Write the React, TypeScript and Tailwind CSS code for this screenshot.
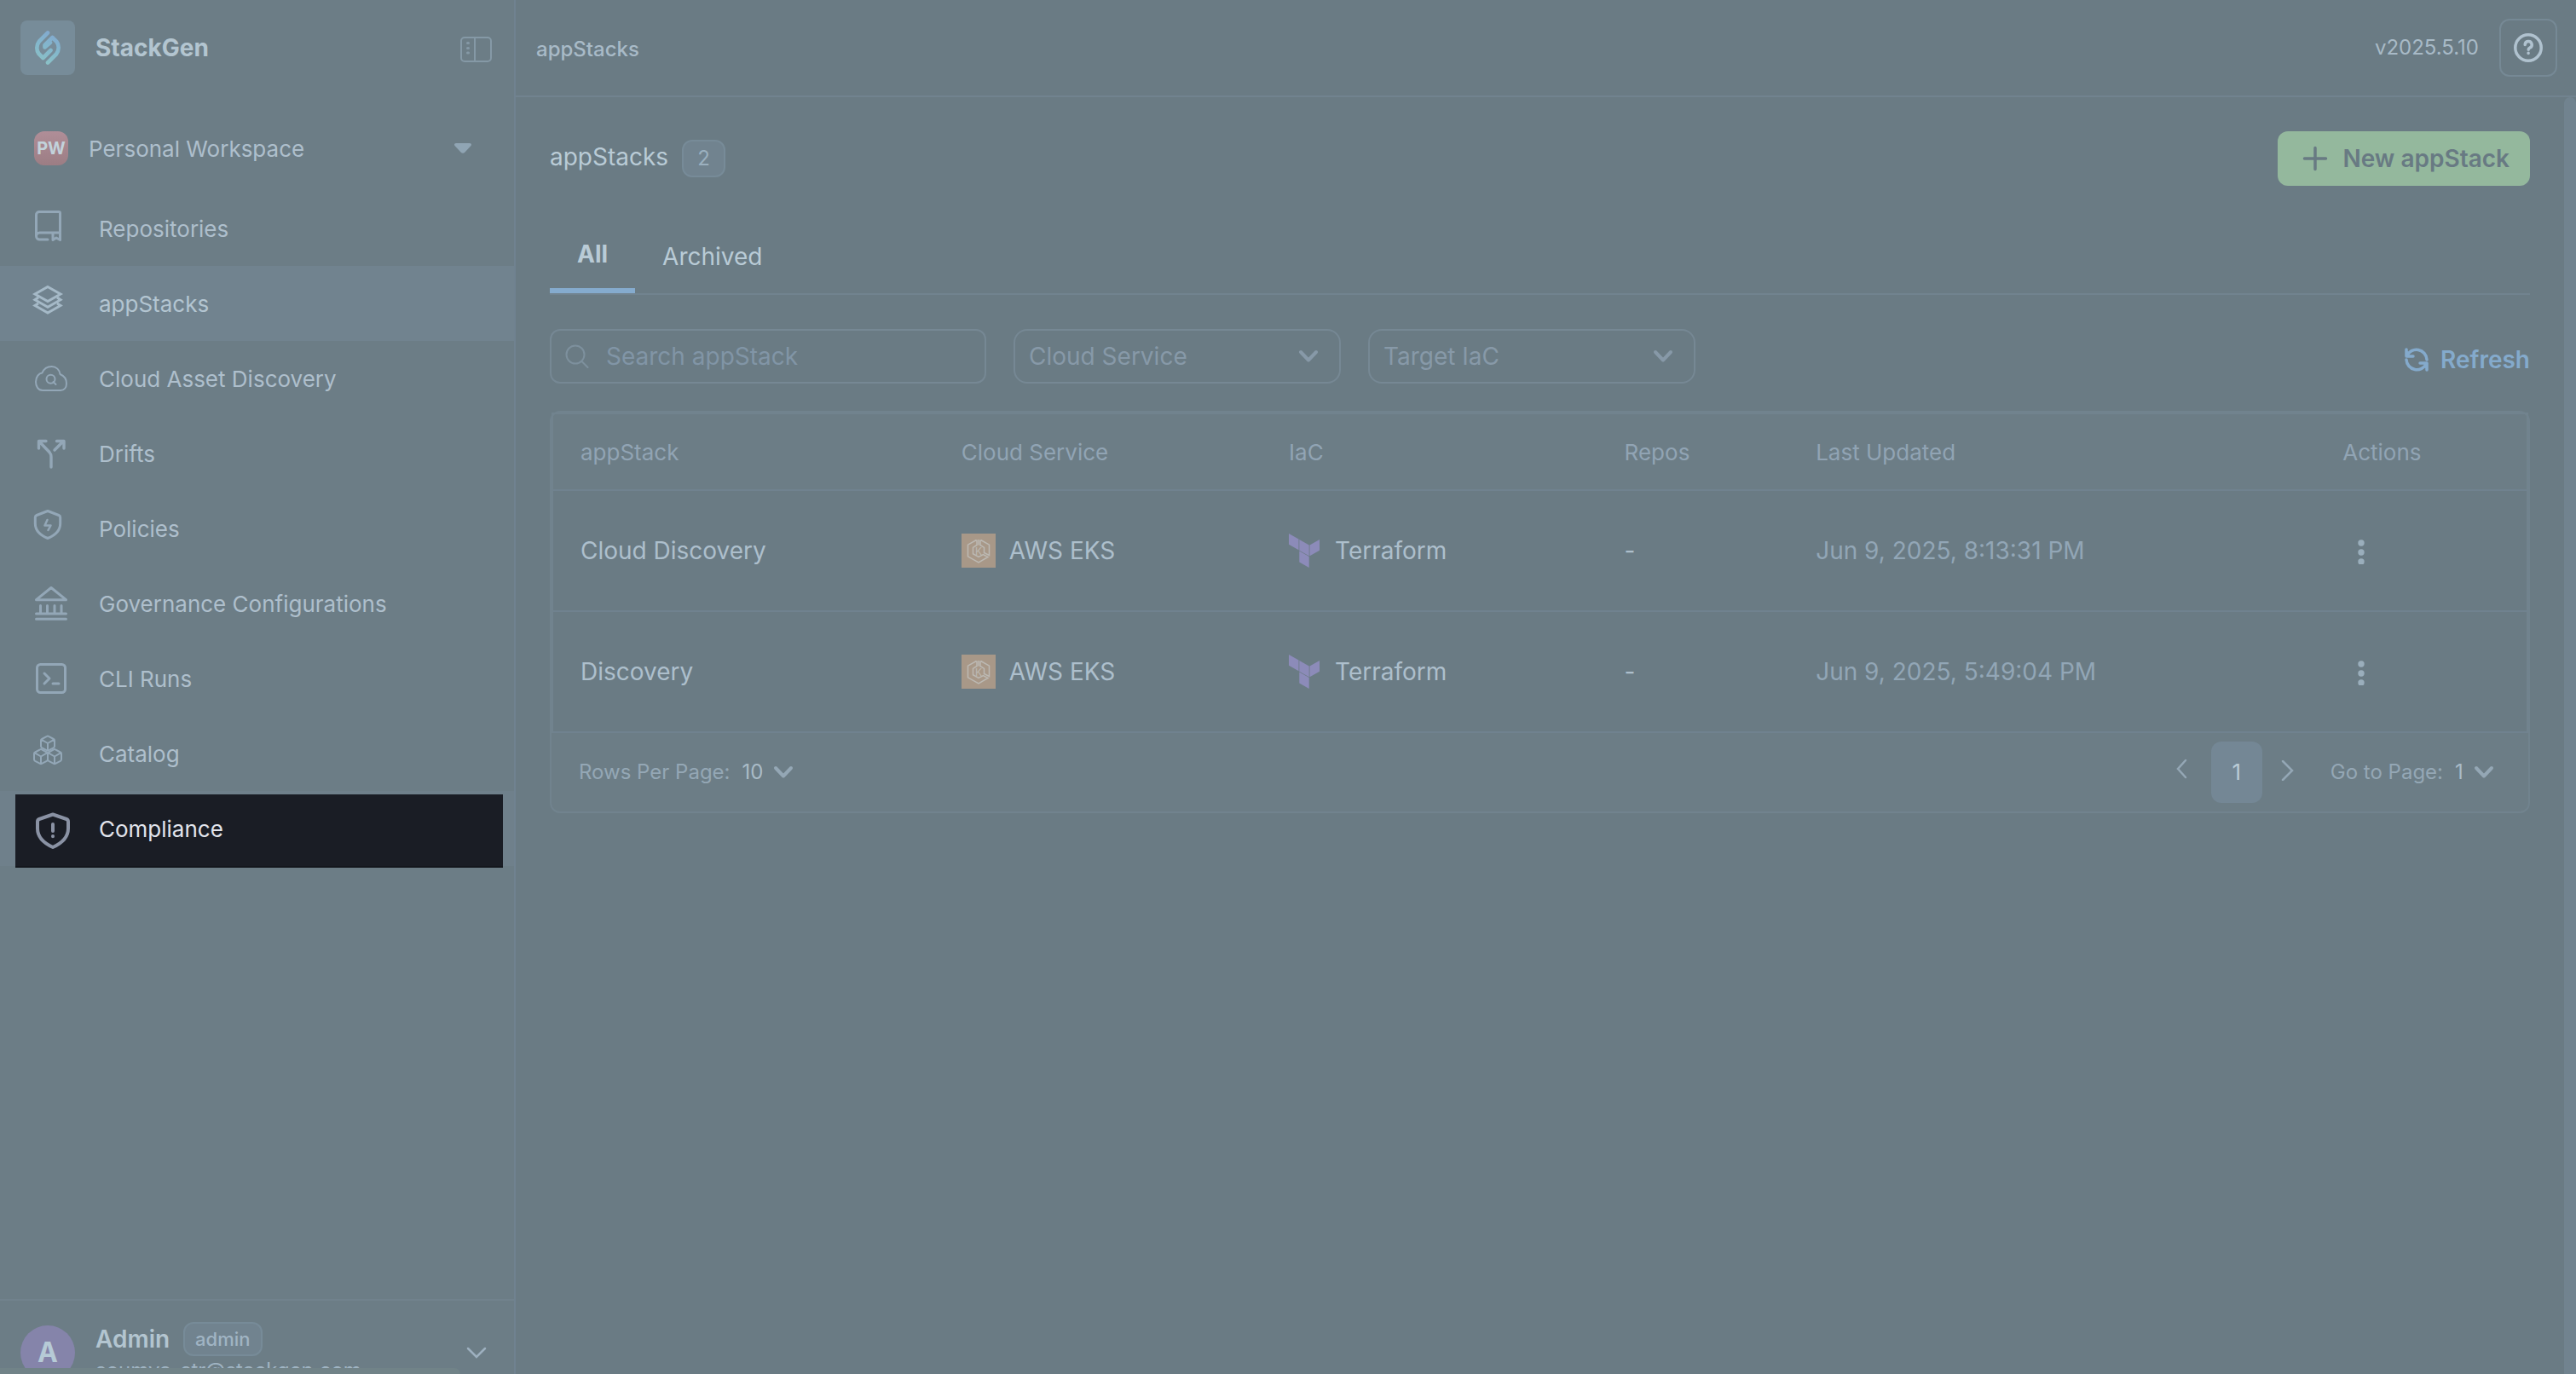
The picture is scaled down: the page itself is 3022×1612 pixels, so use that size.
import type { ReactNode } from "react";

const Chevron = ({ className }: { className?: string }) => (
  <svg viewBox="0 0 24 16" className={className} fill="none" stroke="currentColor" strokeWidth="4" strokeLinecap="round" strokeLinejoin="round" aria-hidden="true">
    <path d="M3 3l9 9.5L21 3" />
  </svg>
);

const NavIcon = ({ children, width = 3 }: { children: ReactNode; width?: number }) => (
  <svg viewBox="0 0 48 48" className="size-12 shrink-0" fill="none" stroke="currentColor" strokeWidth={width} strokeLinecap="round" strokeLinejoin="round" aria-hidden="true">
    {children}
  </svg>
);

// isometric cube, hexagon outline with the three inner edges
const Cube = ({ x, y }: { x: number; y: number }) => (
  <path
    transform={`translate(${x} ${y})`}
    d="M-1-8.2Q0-8.8 1-8.2L6.8-5Q8-4.4 8-3.2V3.4Q8 4.6 6.8 5.3L1 8.4Q0 9-1 8.4L-6.8 5.3Q-8 4.6-8 3.4V-3.2Q-8-4.4-6.8-5ZM-7.6-4.4L0 0L7.6-4.4M0 0V8.6"
  />
);

const Logo = () => (
  <svg viewBox="0 0 30 40" className="h-10 w-[30px]" fill="none" stroke="url(#logo-fill)" strokeWidth="4.6" strokeLinecap="round" strokeLinejoin="round" aria-hidden="true">
    <defs>
      <linearGradient id="logo-fill" x1="24" y1="2" x2="8" y2="38" gradientUnits="userSpaceOnUse">
        <stop stopColor="#82a8cf" />
        <stop offset="0.5" stopColor="#83b7cc" />
        <stop offset="1" stopColor="#8bc1c6" />
      </linearGradient>
    </defs>
    <path d="M15 2.5L5 12.5C1.5 17 1.5 23 4.5 27L9.5 32L18.5 23" />
    <path d="M15 37.5L25 27.5C28.5 23 28.5 17 25.5 13L20.5 8L11.5 17V19.5L18 14" />
  </svg>
);

const navItems = [
  {
    label: "Repositories",
    icon: (
      <NavIcon>
        <path d="M20 37H10.5A4 4 0 0 1 6.5 33V8A3.5 3.5 0 0 1 10 4.5H33A1.5 1.5 0 0 1 34.5 6V30M6.5 33A4 4 0 0 1 10.5 29H34.5" />
        <path d="M26 30V37.5L30 35L34.5 37.5V30" />
      </NavIcon>
    ),
  },
  {
    label: "appStacks",
    active: true,
    icon: (
      <NavIcon>
        <path strokeLinejoin="miter" strokeLinecap="butt" d="M20 4.5L35 13L20 21.5L5 13ZM9 17L5 19.7L20 28.2L35 19.7L31 17M9 24L5 26.5L20 35L35 26.5L31 24" />
      </NavIcon>
    ),
  },
  {
    label: "Cloud Asset Discovery",
    icon: (
      <NavIcon width={2}>
        <path d="M14 38C8.500 38 6 33 6 28C6 21.5 10 18 13.5 17.5C15.5 12.5 19.5 10 24.5 10C30 10 34 14 34.5 19C39.5 21 42 25 42 30C42 35 39 38 35 38Z" />
        <circle cx="23.5" cy="24.7" r="5" />
        <path d="M26.5 28L29.5 31" />
      </NavIcon>
    ),
  },
  {
    label: "Drifts",
    icon: (
      <NavIcon width={3.4}>
        <path d="M18 9.5H9.5V18M10 10L22 22.5Q24 25 24 28V40M28 20L38.5 9.5M30.5 9.5H39V18" />
      </NavIcon>
    ),
  },
  {
    label: "Policies",
    icon: (
      <NavIcon>
        <path d="M20 3.5L33 8.5C34.2 9 34.7 9.7 34.7 11V18C34.7 26 29 32 20 35.5C11 32 5.3 26 5.3 18V11C5.3 9.7 5.8 9 7 8.5Z" />
        <path strokeWidth="2.5" d="M19.5 14L16.5 20.5H23.5L20.5 26" />
      </NavIcon>
    ),
  },
  {
    label: "Governance Configurations",
    icon: (
      <NavIcon>
        <path d="M24 5.5L41.5 19.7H6.5ZM11.5 26.5V35M19.5 26.5V35M28 26.5V35M36 26.5V35M6.5 36H41.5M6.5 42.3H41.5" />
      </NavIcon>
    ),
  },
  {
    label: "CLI Runs",
    icon: (
      <NavIcon>
        <rect x="7.5" y="7.5" width="33" height="33" rx="4" />
        <path d="M16 18L22 24L16 30M26 30H33" />
      </NavIcon>
    ),
  },
  {
    label: "Catalog",
    icon: (
      <NavIcon width={2}>
        <Cube x={20} y={12} />
        <Cube x={12} y={27.5} />
        <Cube x={28} y={27.5} />
      </NavIcon>
    ),
  },
];

const rows = [
  { name: "Cloud Discovery", updated: "Jun 9, 2025, 8:13:31 PM" },
  { name: "Discovery", updated: "Jun 9, 2025, 5:49:04 PM" },
];

const EksIcon = () => (
  <svg viewBox="0 0 40 40" className="size-10 shrink-0" fill="none" stroke="#bcb9b3" strokeWidth="1.5" aria-hidden="true">
    <path fill="#a89888" stroke="none" d="M0 0h40v40H0z" />
    <path d="M17.5 7.5L7.5 13.2V26.8L20 34L31 27.5L25.5 24.5L20 27.5L13.5 23.7V16.3L18 13.5V7.5M22.5 7.5L32.5 13.2V25.5L26.5 22.5V16.3L22 13.5V7.5M20 7V13.5" />
    <text x="20" y="24.5" textAnchor="middle" fontSize="12" fill="#bcb9b3" stroke="none" fontFamily="Inter, sans-serif">K</text>
  </svg>
);

const TerraformIcon = () => (
  <svg viewBox="0 0 36 40" className="h-10 w-9 shrink-0" fill="#8c8bb9" aria-hidden="true">
    <path d="M0 0L11.5 6.5V19.3L0 12.7ZM12.3 7L23.7 13.5V26.2L12.3 19.7ZM24.5 13.5L36 7V19.7L24.5 26.2ZM12.3 20.6L23.7 27.1V40L12.3 33.4Z" />
  </svg>
);

const FilterSelect = ({ label }: { label: string }) => (
  <div className="relative w-96">
    <select aria-label={label} className="h-16 w-full appearance-none rounded-2xl border-2 border-[#768894] bg-transparent px-4 text-[28px] text-[#8799a8]">
      <option>{label}</option>
    </select>
    <Chevron className="pointer-events-none absolute top-6 right-[26px] h-4 w-6 text-[#8799a8]" />
  </div>
);

const PageSelect = ({ label, value, width }: { label: string; value: string; width: string }) => (
  <label className="flex items-center gap-3.5 text-[#94a7b5]">
    {label}
    <span className={"relative flex items-center " + width}>
      <select className="w-full appearance-none bg-transparent text-[#a9bbc7]">
        <option>{value}</option>
      </select>
      <Chevron className="pointer-events-none absolute right-0 h-4 w-6" />
    </span>
  </label>
);

const Sidebar = () => (
  <aside className="flex h-full w-[605px] shrink-0 flex-col border-r-2 border-[#708290] bg-[#6c7d86] text-[26px] text-[#aebfcc]">
    <div className="flex items-center px-6 pt-6 pb-9">
      <div className="flex size-16 items-center justify-center rounded-lg bg-[#778c99]">
        <Logo />
      </div>
      <span className="ml-6 flex-1 text-[28px] font-bold text-[#b3c5d0]">StackGen</span>
      <button aria-label="Collapse sidebar" className="pt-1">
        <svg viewBox="0 0 40 32" className="h-8 w-10" fill="none" stroke="#8599a6" strokeWidth="2" aria-hidden="true">
          <rect x="2" y="2" width="35" height="28" rx="4" />
          <path d="M18 2v28" />
          <path strokeWidth="3" strokeLinecap="round" d="M9.5 8.5h1M9.5 14.5h1M9.5 20h1" />
        </svg>
      </button>
    </div>
    <button className="flex h-[100px] items-center px-10 text-left">
      <span className="flex size-10 items-center justify-center rounded-xl bg-linear-to-b from-[#b08e98] to-[#9c7d84] text-xl font-bold text-[#c2d2db]">PW</span>
      <span className="ml-6 flex-1">Personal Workspace</span>
      <svg viewBox="0 0 20 12" className="mr-2.5 h-3 w-5" fill="#90a5b4" aria-hidden="true">
        <path d="M2 0h16q3 .5 1.5 3l-7.5 8q-2 1.5-4 0L.5 3Q-1 .5 2 0z" />
      </svg>
    </button>
    <nav className="flex-1">
      {navItems.map((item) => (
        <a
          key={item.label}
          href="#"
          className={"flex h-[88px] items-center gap-8 pl-9 " + (item.active ? "bg-[#71838f]" : "")}
        >
          <span className={item.active ? "text-[#a5b9c7]" : "text-[#93a7b7]"}>{item.icon}</span>
          <span className={item.active ? "text-[#b3c5d1]" : ""}>{item.label}</span>
        </a>
      ))}
      {/* highlighted step of the product tour */}
      <a href="#" className="relative flex h-[88px] items-center gap-8 bg-[#6f808b] pl-9 text-[#e1e4ec]">
        <span className="absolute -bottom-0.5 left-[18px] right-[13px] top-1 border-b-2 border-[#14171d] bg-[#1a1d25]" />
        <span className="relative text-[#8a92a4]">
          <NavIcon width={4}>
            <path d="M26 7.5L42 13C43.5 13.5 44 14.5 44 16V24C44 34 37 41 26 46C15 41 8 34 8 24V16C8 14.5 8.5 13.5 10 13Z" />
            <path d="M26 19V27M26 33V33.2" />
          </NavIcon>
        </span>
        <span className="relative">Compliance</span>
      </a>
    </nav>
    <div className="flex h-[88px] shrink-0 items-start border-t-2 border-[#71828d] px-6 pt-6">
      <div className="flex w-full items-center">
        <div className="flex size-16 shrink-0 items-center justify-center rounded-full bg-[#8584aa] text-[32px] font-bold text-[#b6cad6]">A</div>
        <div className="ml-6 flex-1">
          <div className="flex items-center gap-4">
            <span className="text-[28px] font-semibold text-[#b3c5d0]">Admin</span>
            <span className="flex h-10 items-center rounded-xl border-2 border-[#778b98] bg-[#71838f] px-3 text-[22px] font-medium text-[#a0b4c3]">admin</span>
          </div>
          <div className="h-8 text-2xl text-[#a0b4c3]">soumya_str@stackgen.com</div>
        </div>
        <svg viewBox="0 0 24 16" className="mr-2 h-4 w-6" fill="none" stroke="#9db0bf" strokeWidth="2.5" strokeLinecap="round" aria-hidden="true">
          <path d="M2 3l10 10L22 3" />
        </svg>
      </div>
    </div>
  </aside>
);

const headings = [
  { label: "appStack", width: "w-[19.3%]" },
  { label: "Cloud Service", width: "w-[16.6%]" },
  { label: "IaC", width: "w-[17%]" },
  { label: "Repos", width: "w-[9.7%]" },
  { label: "Last Updated", width: "w-[26.7%]" },
  { label: "Actions", width: "w-[10.7%]" },
];

const StackTable = () => (
  <div className="mt-8 rounded-xl border-2 border-[#71838e] bg-[#6c7d86]">
    <div className="border-x-2 border-t-2 border-[#71838e]">
      <table className="w-full table-fixed border-separate border-spacing-0 text-left">
        <thead className="text-[26px] text-[#91a4b4]">
          <tr>
            {headings.map((h) => (
              <th key={h.label} className={"h-[90px] border-b-2 border-[#70828f] px-8 font-normal " + h.width}>{h.label}</th>
            ))}
          </tr>
        </thead>
        <tbody className="bg-[#6a7b84] text-[28px] text-[#adbfcc]">
          {rows.map((row) => (
            <tr key={row.name}>
              <td className="h-[142px] border-b-2 border-[#70828f] px-8">{row.name}</td>
              <td className="border-b-2 border-[#70828f] px-8">
                <div className="flex items-center gap-4"><EksIcon />AWS EKS</div>
              </td>
              <td className="border-b-2 border-[#70828f] px-8">
                <div className="flex items-center gap-[18px]"><TerraformIcon />Terraform</div>
              </td>
              <td className="border-b-2 border-[#70828f] px-8">-</td>
              <td className="border-b-2 border-[#70828f] px-8 text-[#92a6b6]">{row.updated}</td>
              <td className="border-b-2 border-[#70828f] px-8">
                <button aria-label={"Actions for " + row.name} className="ml-4 block">
                  <svg viewBox="0 0 12 32" className="h-8 w-3" fill="#9aaebc" aria-hidden="true">
                    <circle cx="6" cy="7" r="3.7" />
                    <circle cx="6" cy="18" r="3.7" />
                    <circle cx="6" cy="29" r="3.7" />
                  </svg>
                </button>
              </td>
            </tr>
          ))}
        </tbody>
      </table>
    </div>
    <div className="flex h-[92px] items-center pr-10 pl-8 text-2xl">
      <PageSelect label="Rows Per Page:" value="10" width="w-[60px]" />
      <div className="mr-[42px] ml-auto flex items-center text-[#94a7b5]">
        <button aria-label="Previous page" className="pb-2">
          <svg viewBox="0 0 16 24" className="h-6 w-4" fill="none" stroke="currentColor" strokeWidth="2.5" strokeLinecap="round" aria-hidden="true">
            <path d="M12 2L3 12l9 10" />
          </svg>
        </button>
        <button className="mr-[22px] ml-[26px] h-[72px] w-[60px] rounded-xl bg-[#748795] text-[26px] text-[#b9cbd6]">1</button>
        <button aria-label="Next page" className="pb-1">
          <svg viewBox="0 0 16 24" className="h-6 w-4" fill="none" stroke="currentColor" strokeWidth="2.5" strokeLinecap="round" aria-hidden="true">
            <path d="M2 1l11 11L2 23" />
          </svg>
        </button>
      </div>
      <PageSelect label="Go to Page:" value="1" width="w-[46px]" />
    </div>
  </div>
);

const Main = () => (
  <div className="flex min-w-0 flex-1 flex-col">
    <header className="flex h-[114px] shrink-0 items-center border-b-2 border-[#71838f] pr-[22px] pl-6">
      <span className="flex-1 pt-1 text-2xl font-medium text-[#a8bac7]">appStacks</span>
      <span className="text-2xl text-[#a8bac7]">v2025.5.10</span>
      <button aria-label="Help" className="ml-6 flex size-[68px] items-center justify-center rounded-xl border-2 border-[#768995]">
        <svg viewBox="0 0 36 36" className="size-9" fill="none" stroke="#b0c2cf" strokeWidth="3.5" strokeLinecap="round" strokeLinejoin="round" aria-hidden="true">
          <circle cx="18" cy="18" r="15.2" />
          <path d="M14.2 14.5a4 4 0 1 1 5.6 3.7q-1.6.7-1.6 2M18.1 24.3v.2" />
        </svg>
      </button>
    </header>
    <div className="flex min-h-0 flex-1">
      <main className="min-w-0 flex-1 p-10">
        <div className="flex items-center">
          <h1 className="pb-1 text-[28px] text-[#b9cbd6]">appStacks</h1>
          <span className="ml-4 flex h-11 items-center rounded-xl border-2 border-[#778b98] bg-[#71838f] px-4 text-2xl text-[#9bb0bf]">2</span>
          <button className="ml-auto flex h-16 items-center gap-4 rounded-xl bg-[#94b89d] pr-6 pl-7 text-[28px] font-semibold text-[#687a83]">
            <svg viewBox="0 0 32 32" className="size-8" fill="none" stroke="currentColor" strokeWidth="3.5" strokeLinecap="round" aria-hidden="true">
              <path d="M16 3.5v25M3.5 16h25" />
            </svg>
            New appStack
          </button>
        </div>
        <div className="mt-10 flex h-[88px] border-b-2 border-[#71838f] text-[28px] text-[#b9cbd6]">
          <button className="border-b-6 border-[#85abce] px-8 font-bold">All</button>
          <button className="px-8">Archived</button>
        </div>
        <div className="mt-10 flex items-center gap-8">
          <div className="relative w-[512px]">
            <svg viewBox="0 0 28 28" className="absolute top-[18px] left-[18px] size-7" fill="none" stroke="#7d909d" strokeWidth="2" strokeLinecap="round" aria-hidden="true">
              <circle cx="12" cy="12" r="10.5" />
              <path d="M19.5 20l7 7" />
            </svg>
            <input aria-label="Search appStack" placeholder="Search appStack" className="h-16 w-full rounded-xl border-2 border-[#768894] bg-transparent pr-4 pl-16 text-[28px] placeholder:text-[#8195a6]" />
          </div>
          <FilterSelect label="Cloud Service" />
          <FilterSelect label="Target IaC" />
          <button className="ml-auto flex items-center gap-3 pt-2 text-[28px] font-semibold text-[#84aacc]">
            <svg viewBox="0 0 32 32" className="size-8" fill="none" stroke="currentColor" strokeWidth="3.5" strokeLinecap="round" strokeLinejoin="round" aria-hidden="true">
              <path d="M4 4v8h8M28 28v-8h-8M4.5 11.5A12.3 12.3 0 0 1 28 16M27.5 20.5A12.3 12.3 0 0 1 4 16" />
            </svg>
            Refresh
          </button>
        </div>
        <StackTable />
      </main>
      <div className="w-3.5 rounded-t-lg bg-[#71838f]" />
    </div>
  </div>
);

export default function App() {
  return (
    <div className="relative flex h-screen overflow-hidden bg-[#6a7b84] font-['Inter',sans-serif]">
      <Sidebar />
      <Main />
      <div className="absolute bottom-0 left-0 h-[7px] w-[540px] rounded-tr-lg bg-[#718388]" />
    </div>
  );
}
